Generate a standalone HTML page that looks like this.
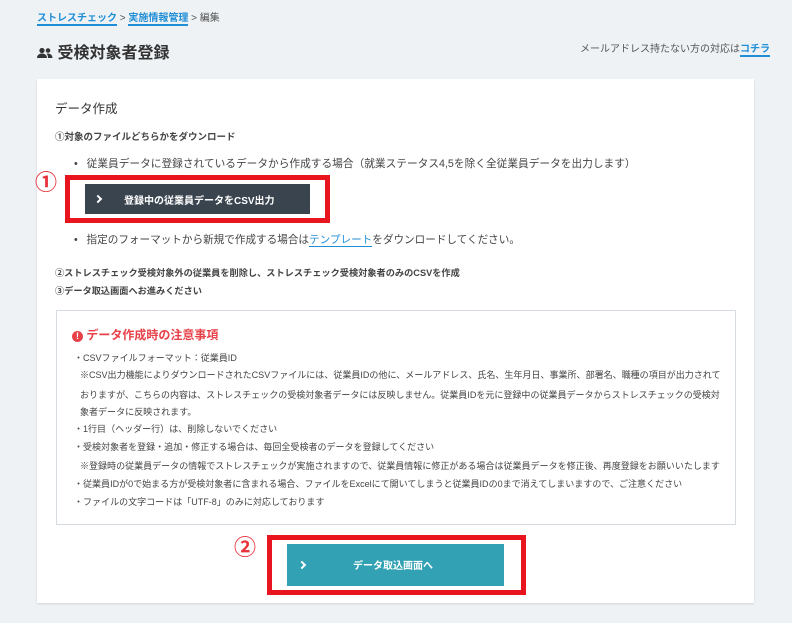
<!DOCTYPE html>
<html><head><meta charset="utf-8"><style>
*{margin:0;padding:0;box-sizing:border-box}
body{width:792px;height:623px;background:#eef2f5;font-family:"Liberation Sans","Noto Sans CJK JP",sans-serif;color:#333;position:relative;overflow:hidden}
.a{position:absolute;white-space:nowrap}
.bc{top:9px;left:37px;font-size:10px;color:#555}
.bc a{color:#1f8ed6;font-weight:bold;text-decoration:none;border-bottom:2px solid #1f8ed6}
.panel{position:absolute;left:37px;top:79px;width:717px;height:524px;background:#fff;box-shadow:0 1px 2px rgba(0,0,0,.12)}
.note{position:absolute;left:56px;top:310px;width:680px;height:215px;border:1px solid #d6dbe2}
.n{font-size:9.3px;color:#444;left:74px;transform:scaleX(.97);transform-origin:left}
.red{position:absolute;border:5px solid #e8141e}
.btn{position:absolute;color:#fff;font-weight:bold;font-size:10px}
.chev{position:absolute;width:6px;height:6px;border-right:2px solid #fff;border-top:2px solid #fff;transform:rotate(45deg)}
.circ{color:#e8323c;font-size:22px;font-weight:bold}
</style></head><body>
<div class="a bc"><a>ストレスチェック</a> &gt; <a>実施情報管理</a> &gt; 編集</div>
<div class="a" style="left:37px;top:39px;font-size:16px;font-weight:bold;color:#333">
<svg width="16" height="12" viewBox="0 0 16 12" style="vertical-align:-1px"><circle cx="5" cy="3.5" r="2.6" fill="#333"/><circle cx="11" cy="3.5" r="2.3" fill="#333"/><path d="M0 11c0-3 2.5-4.5 5-4.5s5 1.5 5 4.5z" fill="#333"/><path d="M10.5 6.5c2.5 0 5 1.3 5 4.5h-4.5c0-2-.5-3.5-1.5-4.2z" fill="#333"/></svg> 受検対象者登録</div>
<div class="a" style="left:580px;top:40px;font-size:10px;color:#555">メールアドレス持たない方の対応は<b style="color:#1f8ed6;border-bottom:2px solid #1f8ed6">コチラ</b></div>
<div class="panel"></div>
<div class="a" style="left:55px;top:98px;font-size:12.5px;color:#333">データ作成</div>
<div class="a" style="left:55px;top:129px;font-size:9.5px;font-weight:bold;color:#444">①対象のファイルどちらかをダウンロード</div>
<div class="a" style="left:74px;top:156px;font-size:10.7px;color:#444">•&nbsp;&nbsp; 従業員データに登録されているデータから作成する場合（就業ステータス4,5を除く全従業員データを出力します）</div>
<div class="a circ" style="left:35px;top:165px">①</div>
<div class="red" style="left:65px;top:175px;width:265px;height:48px"></div>
<div class="btn" style="left:85px;top:184px;width:225px;height:30px;background:#3a444f"><span class="chev" style="left:10px;top:12px"></span><span class="a" style="left:39px;top:8px">登録中の従業員データをCSV出力</span></div>
<div class="a" style="left:74px;top:232px;font-size:10.6px;color:#444">•&nbsp;&nbsp; 指定のフォーマットから新規で作成する場合は<span style="color:#1f8ed6;border-bottom:1px solid #1f8ed6">テンプレート</span>をダウンロードしてください。</div>
<div class="a" style="left:55px;top:265px;font-size:9.2px;font-weight:bold;color:#444">②ストレスチェック受検対象外の従業員を削除し、ストレスチェック受検対象者のみのCSVを作成</div>
<div class="a" style="left:55px;top:283px;font-size:9.2px;font-weight:bold;color:#444">③データ取込画面へお進みください</div>
<div class="note"></div>
<div class="a" style="left:72px;top:326px;font-size:12px;font-weight:bold;color:#e8414a"><span style="display:inline-block;width:11px;height:11px;border-radius:50%;background:#e8414a;color:#fff;font-size:9px;text-align:center;line-height:11px;vertical-align:0">!</span> データ作成時の注意事項</div>
<div class="a n" style="top:350px">・CSVファイルフォーマット：従業員ID</div>
<div class="a n" style="top:367px;left:80px">※CSV出力機能によりダウンロードされたCSVファイルには、従業員IDの他に、メールアドレス、氏名、生年月日、事業所、部署名、職種の項目が出力されて</div>
<div class="a n" style="top:387px;left:80px">おりますが、こちらの内容は、ストレスチェックの受検対象者データには反映しません。従業員IDを元に登録中の従業員データからストレスチェックの受検対</div>
<div class="a n" style="top:404px;left:80px">象者データに反映されます。</div>
<div class="a n" style="top:421px">・1行目（ヘッダー行）は、削除しないでください</div>
<div class="a n" style="top:439px">・受検対象者を登録・追加・修正する場合は、毎回全受検者のデータを登録してください</div>
<div class="a n" style="top:458px;left:80px">※登録時の従業員データの情報でストレスチェックが実施されますので、従業員情報に修正がある場合は従業員データを修正後、再度登録をお願いいたします</div>
<div class="a n" style="top:476px">・従業員IDが0で始まる方が受検対象者に含まれる場合、ファイルをExcelにて開いてしまうと従業員IDの0まで消えてしまいますので、ご注意ください</div>
<div class="a n" style="top:494px">・ファイルの文字コードは「UTF-8」のみに対応しております</div>
<div class="a circ" style="left:234px;top:530px">②</div>
<div class="red" style="left:267px;top:535px;width:259px;height:60px"></div>
<div class="btn" style="left:287px;top:544px;width:217px;height:42px;background:#31a1b3"><span class="chev" style="left:12px;top:18px"></span><span class="a" style="left:66px;top:13px">データ取込画面へ</span></div>
</body></html>
